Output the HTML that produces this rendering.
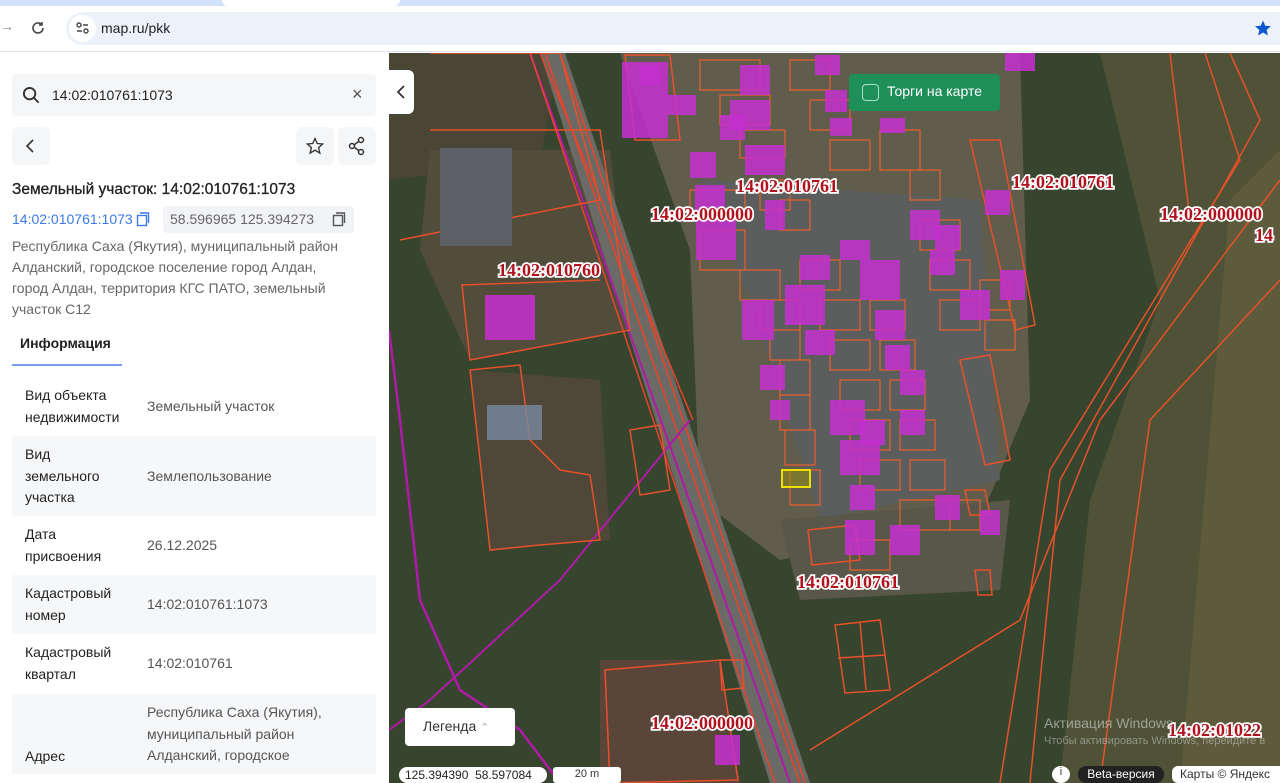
<!DOCTYPE html>
<html><head><meta charset="utf-8"><style>
*{margin:0;padding:0;box-sizing:border-box}
body{width:1280px;height:783px;overflow:hidden;background:#fff;font-family:"Liberation Sans",sans-serif;position:relative}
.top{position:absolute;left:0;top:0;width:1280px;height:52px;background:#fff;border-bottom:1px solid #dde3ea}
.tabs{position:absolute;left:0;top:0;width:1280px;height:6px;background:#d3e3fd}
.tabw{position:absolute;left:222px;top:0;width:178px;height:6px;background:#fff;border-radius:0 0 8px 8px}
.addr{position:absolute;left:66px;top:12px;width:1214px;height:33px;background:#edf2fa;border-radius:17px 0 0 17px}
.panel{position:absolute;left:0;top:53px;width:389px;height:730px;background:#fff}
.srch{position:absolute;left:12px;top:21px;width:364px;height:42px;background:#f5f6f8;border-radius:4px}
.btn{position:absolute;width:38px;height:38px;background:#f5f6f8;border-radius:6px}
.row{position:absolute;left:12px;width:364px}
.row.g{background:#f6f7f9}
.k{position:absolute;left:13px;font-size:14px;line-height:21.5px;color:#222}
.v{position:absolute;left:135px;font-size:14px;line-height:21.5px;color:#555}
.lbl{font-family:"Liberation Serif",serif;font-weight:bold;font-size:18px;fill:#b0121e;stroke:#fff;stroke-width:3.5px;paint-order:stroke}
</style></head><body>
<div class="top">
<div class="tabs"></div><div class="tabw"></div>
<div style="position:absolute;left:0;top:18px;color:#888;font-size:14px">→</div>
<svg style="position:absolute;left:30px;top:20px" width="16" height="16" viewBox="0 0 16 16"><path d="M13 8a5 5 0 1 1-1.5-3.6M12 2v3h-3" fill="none" stroke="#444" stroke-width="1.6"/></svg>
<div class="addr">
<div style="position:absolute;left:3px;top:3px;width:27px;height:27px;border-radius:50%;background:#fff"></div>
<svg style="position:absolute;left:9px;top:9px" width="15" height="15" viewBox="0 0 15 15"><circle cx="4" cy="4" r="2" fill="none" stroke="#444" stroke-width="1.4"/><path d="M8 4h5M2 10h5" stroke="#444" stroke-width="1.4"/><circle cx="11" cy="10" r="2" fill="none" stroke="#444" stroke-width="1.4"/></svg>
<div style="position:absolute;left:35px;top:8px;font-size:14px;color:#222">map.ru/pkk</div>
<svg style="position:absolute;left:1188px;top:7px" width="18" height="18" viewBox="0 0 24 24"><path d="M12 2l3 7 7.5.6-5.7 5 1.8 7.4L12 18l-6.6 4 1.8-7.4-5.7-5L9 9z" fill="#0b57d0"/></svg>
</div>
</div>

<div class="panel">
<div class="srch">
<svg style="position:absolute;left:10px;top:12px" width="19" height="19" viewBox="0 0 20 20"><circle cx="8" cy="8" r="6" fill="none" stroke="#333" stroke-width="2"/><path d="M12.5 12.5l5 5" stroke="#333" stroke-width="2"/></svg>
<div style="position:absolute;left:40px;top:13px;font-size:14px;color:#222">14:02:010761:1073</div>
<div style="position:absolute;left:340px;top:10px;font-size:18px;color:#555">×</div>
</div>
<div class="btn" style="left:12px;top:74px"><svg style="position:absolute;left:12px;top:11px" width="14" height="16" viewBox="0 0 14 16"><path d="M9 2L3 8l6 6" fill="none" stroke="#333" stroke-width="1.6"/></svg></div>
<div class="btn" style="left:296px;top:74px"><svg style="position:absolute;left:9px;top:9px" width="20" height="20" viewBox="0 0 24 24"><path d="M12 3l2.7 6 6.5.6-4.9 4.4 1.5 6.5L12 17l-5.8 3.5 1.5-6.5L2.8 9.6 9.3 9z" fill="none" stroke="#333" stroke-width="1.6"/></svg></div>
<div class="btn" style="left:338px;top:74px"><svg style="position:absolute;left:9px;top:9px" width="20" height="20" viewBox="0 0 20 20"><circle cx="14" cy="4" r="2.5" fill="none" stroke="#333" stroke-width="1.5"/><circle cx="5" cy="10" r="2.5" fill="none" stroke="#333" stroke-width="1.5"/><circle cx="14" cy="16" r="2.5" fill="none" stroke="#333" stroke-width="1.5"/><path d="M7.2 8.8l4.6-3.4M7.2 11.2l4.6 3.4" stroke="#333" stroke-width="1.5"/></svg></div>
<div style="position:absolute;left:12px;top:128px;font-size:15.5px;color:#222;-webkit-text-stroke:0.3px #222">Земельный участок: 14:02:010761:1073</div>
<div style="position:absolute;left:12px;top:158px;font-size:14px;color:#3b7ae8">14:02:010761:1073</div>
<svg style="position:absolute;left:136px;top:159px" width="14" height="15" viewBox="0 0 14 15"><rect x="1.5" y="3.5" width="9" height="10" fill="none" stroke="#3b7ae8" stroke-width="1.4"/><path d="M4 1h8.5v10" fill="none" stroke="#3b7ae8" stroke-width="1.4"/></svg>
<div style="position:absolute;left:163px;top:153px;width:191px;height:27px;background:#f2f3f6;border-radius:4px"></div>
<div style="position:absolute;left:170px;top:158px;font-size:14px;color:#666">58.596965 125.394273</div>
<svg style="position:absolute;left:332px;top:159px" width="14" height="15" viewBox="0 0 14 15"><rect x="1.5" y="3.5" width="9" height="10" fill="none" stroke="#555" stroke-width="1.4"/><path d="M4 1h8.5v10" fill="none" stroke="#555" stroke-width="1.4"/></svg>
<div style="position:absolute;left:12px;top:183px;width:340px;font-size:14px;line-height:21px;color:#666">Республика Саха (Якутия), муниципальный район Алданский, городское поселение город Алдан, город Алдан, территория КГС ПАТО, земельный участок С12</div>
<div style="position:absolute;left:20px;top:282px;font-size:14px;font-weight:bold;color:#222">Информация</div>
<div style="position:absolute;left:12px;top:311px;width:110px;height:2px;background:#7b9cf0"></div>

<div class="row" style="top:323px;height:60px"><div class="k" style="top:9px">Вид объекта<br>недвижимости</div><div class="v" style="top:20px">Земельный участок</div></div>
<div class="row g" style="top:383px;height:80px"><div class="k" style="top:8px">Вид<br>земельного<br>участка</div><div class="v" style="top:30px">Землепользование</div></div>
<div class="row" style="top:463px;height:59px"><div class="k" style="top:8px">Дата<br>присвоения</div><div class="v" style="top:19px">26.12.2025</div></div>
<div class="row g" style="top:522px;height:59px"><div class="k" style="top:8px">Кадастровый<br>номер</div><div class="v" style="top:19px">14:02:010761:1073</div></div>
<div class="row" style="top:581px;height:60px"><div class="k" style="top:8px">Кадастровый<br>квартал</div><div class="v" style="top:19px">14:02:010761</div></div>
<div class="row g" style="top:641px;height:80px"><div class="k" style="top:52px">Адрес</div><div class="v" style="top:8px">Республика Саха (Якутия),<br>муниципальный район<br>Алданский, городское</div></div>
</div>

<svg style="position:absolute;left:389px;top:53px" width="891" height="730" viewBox="389 53 891 730">
<rect x="389" y="53" width="891" height="730" fill="#37452e"/>
<path d="M1100 53L1280 53 1280 783 1060 783 1090 500 1160 300z" fill="#4f5236"/>
<path d="M1230 200 L1280 150 1280 783 1180 783z" fill="#5e5a3c"/>
<path d="M389 53L560 53 540 160 389 180z" fill="#4a4636"/>
<path d="M430 150 L610 150 630 330 470 360 420 250z" fill="#524c3a"/>
<path d="M620 53L1020 53 1030 400 980 520 780 560 700 500 690 250z" fill="#605d4c"/>
<path d="M700 180 L980 200 1000 480 820 520 750 300z" fill="#5b5e5c"/>
<path d="M470 370 L600 380 610 540 490 550z" fill="#4f4838"/>
<path d="M600 660 L720 660 740 783 600 783z" fill="#5a4638"/>
<path d="M780 520 L1010 500 1000 590 800 600z" fill="#58574a"/>
<path d="M540 53 L565 53 810 783 770 783z" fill="#6a6a66"/>
<path d="M545 53 L800 783 M560 53 L805 783" stroke="#e8442a" stroke-width="1.6" fill="none"/>
<path d="M530 53 L790 783" stroke="#b01aa8" stroke-width="2" fill="none"/>
<path d="M540 53 L693 420 M530 53 L775 783" stroke="#e8442a" stroke-width="1.5" fill="none"/>
<path d="M389 330 L400 420 420 600 460 690 520 730 560 783" stroke="#b01aa8" stroke-width="2.5" fill="none"/>
<path d="M690 420 L560 580 430 700 389 730" stroke="#b01aa8" stroke-width="2" fill="none"/>
<g fill="none" stroke="#e8502a" stroke-width="1.5">
<path d="M1205 53 L1240 160 1050 470 1000 783"/><path d="M1230 53 L1260 120 1060 480 1030 783"/>
<path d="M1280 180 L1100 420 1020 620 810 750"/><path d="M1280 280 L1150 420 1100 783"/>
<path d="M1170 53 L1190 220"/>
<path d="M430 53 L560 53 L600 200 L400 240"/><path d="M430 130 L600 130 L630 330 L470 360 L462 285 L600 280"/>
<path d="M470 370 L520 365 530 440 560 470 590 475 600 540 540 545 490 550z"/>
<path d="M605 670 L720 660 738 780 610 783z"/><path d="M720 660 L742 660 744 688 722 690z"/>
<path d="M835 625 L880 620 890 690 845 693z M860 622 L866 690 M838 658 L885 655"/>
<path d="M625 55 L670 55 680 140 635 140z"/>
<path d="M630 430 L660 425 670 490 640 495z"/>
<path d="M970 140 L1000 140 1035 325 1015 330z"/>
<path d="M960 360 L990 355 1010 460 985 465z"/>
<path d="M965 490 L985 490 990 515 970 515z M975 570 L990 570 992 595 978 595z"/>
<path d="M808 530 L855 525 860 560 812 565z"/>
</g>
<g fill="none" stroke="#e8602e" stroke-width="1.2">
<path d="M700 60h60v30h-60zM720 95h50v30h-50zM740 130h45v28h-45zM690 190h55v30h-55zM700 230h45v40h-45zM740 270h40v30h-40zM760 300h40v30h-40zM770 330h30v30h-30zM780 360h30v35h-30zM780 395h30v35h-30zM785 430h30v35h-30zM790 470h30v35h-30zM800 260h40v30h-40zM820 300h40v30h-40zM830 340h40v30h-40zM840 380h40v30h-40zM850 420h40v30h-40zM860 460h40v30h-40zM870 300h35v30h-35zM880 340h35v30h-35zM890 380h35v30h-35zM900 420h35v30h-35zM910 460h35v30h-35zM920 220h40v30h-40zM930 260h40v30h-40zM940 300h40v30h-40zM980 280h30v30h-30zM985 320h30v30h-30zM880 130h40v40h-40zM910 170h30v30h-30zM790 60h40v30h-40zM810 100h40v30h-40zM830 140h40v30h-40zM900 500h50v30h-50zM850 540h40v30h-40zM950 500h30v30h-30zM760 180h30v30h-30zM780 200h30v30h-30z"/>
</g>
<g fill="#c62fd0" fill-opacity=".85">
<rect x="622" y="62" width="46" height="76"/><rect x="668" y="95" width="28" height="20"/><rect x="640" y="65" width="20" height="20"/>
<rect x="740" y="65" width="30" height="30"/><rect x="730" y="100" width="40" height="30"/><rect x="745" y="145" width="40" height="30"/><rect x="825" y="90" width="22" height="22"/><rect x="830" y="118" width="22" height="18"/><rect x="815" y="55" width="25" height="20"/><rect x="880" y="118" width="25" height="15"/><rect x="1005" y="53" width="30" height="18"/>
<rect x="690" y="152" width="26" height="26"/><rect x="695" y="185" width="30" height="30"/><rect x="696" y="220" width="40" height="40"/><rect x="720" y="115" width="25" height="25"/><rect x="765" y="200" width="20" height="30"/>
<rect x="742" y="300" width="32" height="40"/><rect x="760" y="365" width="25" height="25"/><rect x="770" y="400" width="20" height="20"/><rect x="785" y="285" width="40" height="40"/><rect x="800" y="255" width="30" height="25"/><rect x="805" y="330" width="30" height="25"/>
<rect x="840" y="240" width="30" height="20"/><rect x="860" y="260" width="40" height="40"/><rect x="875" y="310" width="30" height="30"/><rect x="885" y="345" width="25" height="25"/><rect x="900" y="370" width="25" height="25"/>
<rect x="910" y="210" width="30" height="30"/><rect x="930" y="250" width="25" height="25"/><rect x="935" y="225" width="25" height="25"/><rect x="960" y="290" width="30" height="30"/><rect x="985" y="190" width="25" height="25"/><rect x="1000" y="270" width="25" height="30"/>
<rect x="830" y="400" width="35" height="35"/><rect x="840" y="440" width="40" height="35"/><rect x="860" y="420" width="25" height="25"/><rect x="900" y="410" width="25" height="25"/><rect x="850" y="485" width="25" height="25"/>
<rect x="485" y="295" width="50" height="45"/><rect x="845" y="520" width="30" height="35"/><rect x="890" y="525" width="30" height="30"/><rect x="935" y="495" width="25" height="25"/><rect x="980" y="510" width="20" height="25"/><rect x="715" y="735" width="25" height="30"/>
</g>
<rect x="782" y="470" width="28" height="17" fill="#a0a000" fill-opacity=".4" stroke="#f0e000" stroke-width="2"/>
<rect x="440" y="148" width="72" height="98" fill="#5e6068"/>
<rect x="487" y="405" width="55" height="35" fill="#7888a0" opacity=".8"/>
<text class="lbl" x="736" y="192">14:02:010761</text>
<text class="lbl" x="1012" y="188">14:02:010761</text>
<text class="lbl" x="651" y="220">14:02:000000</text>
<text class="lbl" x="1160" y="220">14:02:000000</text>
<text class="lbl" x="1255" y="241">14</text>
<text class="lbl" x="498" y="276">14:02:010760</text>
<text class="lbl" x="797" y="588">14:02:010761</text>
<text class="lbl" x="651" y="729">14:02:000000</text>
<text class="lbl" x="1168" y="736">14:02:01022</text>
<text x="1044" y="728" font-size="14" fill="#d8d8d8" fill-opacity=".6" font-family="Liberation Sans">Активация Windows</text>
<text x="1044" y="744" font-size="11" fill="#d8d8d8" fill-opacity=".5" font-family="Liberation Sans">Чтобы активировать Windows, перейдите в</text>
</svg>

<div style="position:absolute;left:389px;top:70px;width:25px;height:44px;background:#fff;border-radius:0 6px 6px 0"><svg style="position:absolute;left:6px;top:14px" width="12" height="16" viewBox="0 0 12 16"><path d="M9 2L3 8l6 6" fill="none" stroke="#333" stroke-width="1.8"/></svg></div>
<div style="position:absolute;left:849px;top:74px;width:151px;height:37px;background:#1f8f5a;border-radius:4px">
<div style="position:absolute;left:13px;top:10px;width:17px;height:17px;border:1.5px solid #aee0c4;border-radius:4px"></div>
<div style="position:absolute;left:38px;top:9px;font-size:14px;color:#fff">Торги на карте</div></div>
<div style="position:absolute;left:405px;top:708px;width:110px;height:38px;background:#fff;border-radius:4px;font-size:14px;color:#333;padding:10px 0 0 18px">Легенда <span style="color:#aaa;font-size:11px">⌃</span></div>
<div style="position:absolute;left:399px;top:767px;width:148px;height:16px;background:#fff;border-radius:8px;font-size:12px;color:#222;padding:1px 0 0 6px">125.394390&nbsp;&nbsp;58.597084</div>
<div style="position:absolute;left:553px;top:767px;width:68px;height:16px;background:#fff;border-radius:3px;font-size:11px;color:#333;text-align:center;padding-top:1px">20 m</div>
<div style="position:absolute;left:1052px;top:766px;width:18px;height:17px;border-radius:50%;background:#fff;font-size:11px;text-align:center;color:#333">i</div>
<div style="position:absolute;left:1078px;top:766px;width:86px;height:17px;background:#222;border-radius:8px;font-size:12px;color:#fff;text-align:center;padding-top:1px">Beta-версия</div>
<div style="position:absolute;left:1172px;top:766px;width:108px;height:17px;background:#fff;border-radius:6px 0 0 6px;font-size:12px;color:#333;padding:1px 0 0 8px">Карты © Яндекс</div>
</body></html>
